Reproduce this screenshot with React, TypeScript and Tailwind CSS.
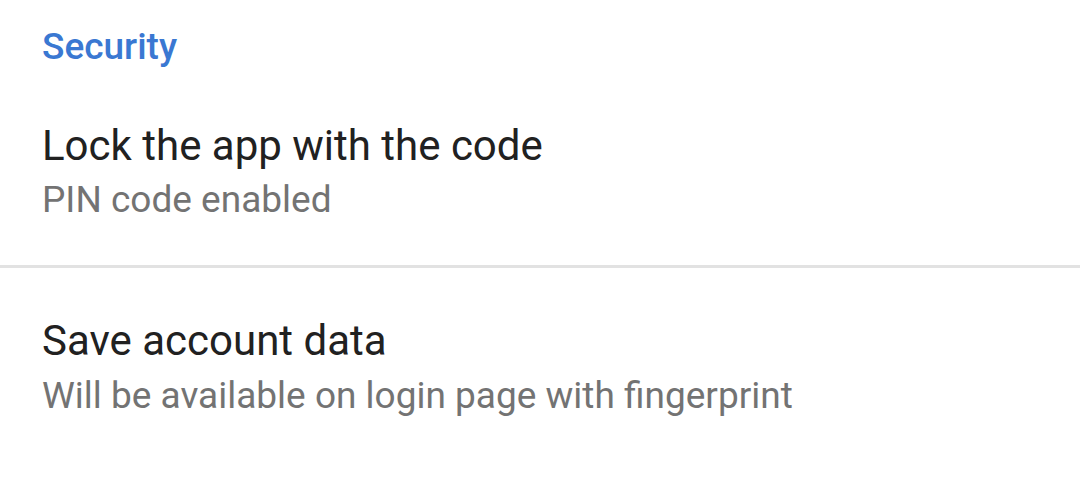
export default function App() {
  return (
    <div className="w-[1080px] h-[480px] bg-white overflow-hidden font-['Roboto',sans-serif]">
      <div className="pt-[25px] px-[42px]">
        <h2 className="text-[37px] leading-[44px] font-medium text-[#3a78d2]">Security</h2>
      </div>

      <div className="pt-[52px] pb-[41px] px-[42px]">
        <div className="text-[42px] leading-[50px] text-[#212121]">Lock the app with the code</div>
        <div className="mt-[5px] text-[37px] leading-[48px] text-[#737373]">PIN code enabled</div>
      </div>

      <div className="h-[3px] bg-[#e2e2e2]" />

      <div className="pt-[48px] px-[42px]">
        <div className="text-[42px] leading-[50px] text-[#212121]">Save account data</div>
        <div className="mt-[6px] text-[37px] leading-[48px] text-[#737373]">
          Will be available on login page with fingerprint
        </div>
      </div>
    </div>
  );
}
